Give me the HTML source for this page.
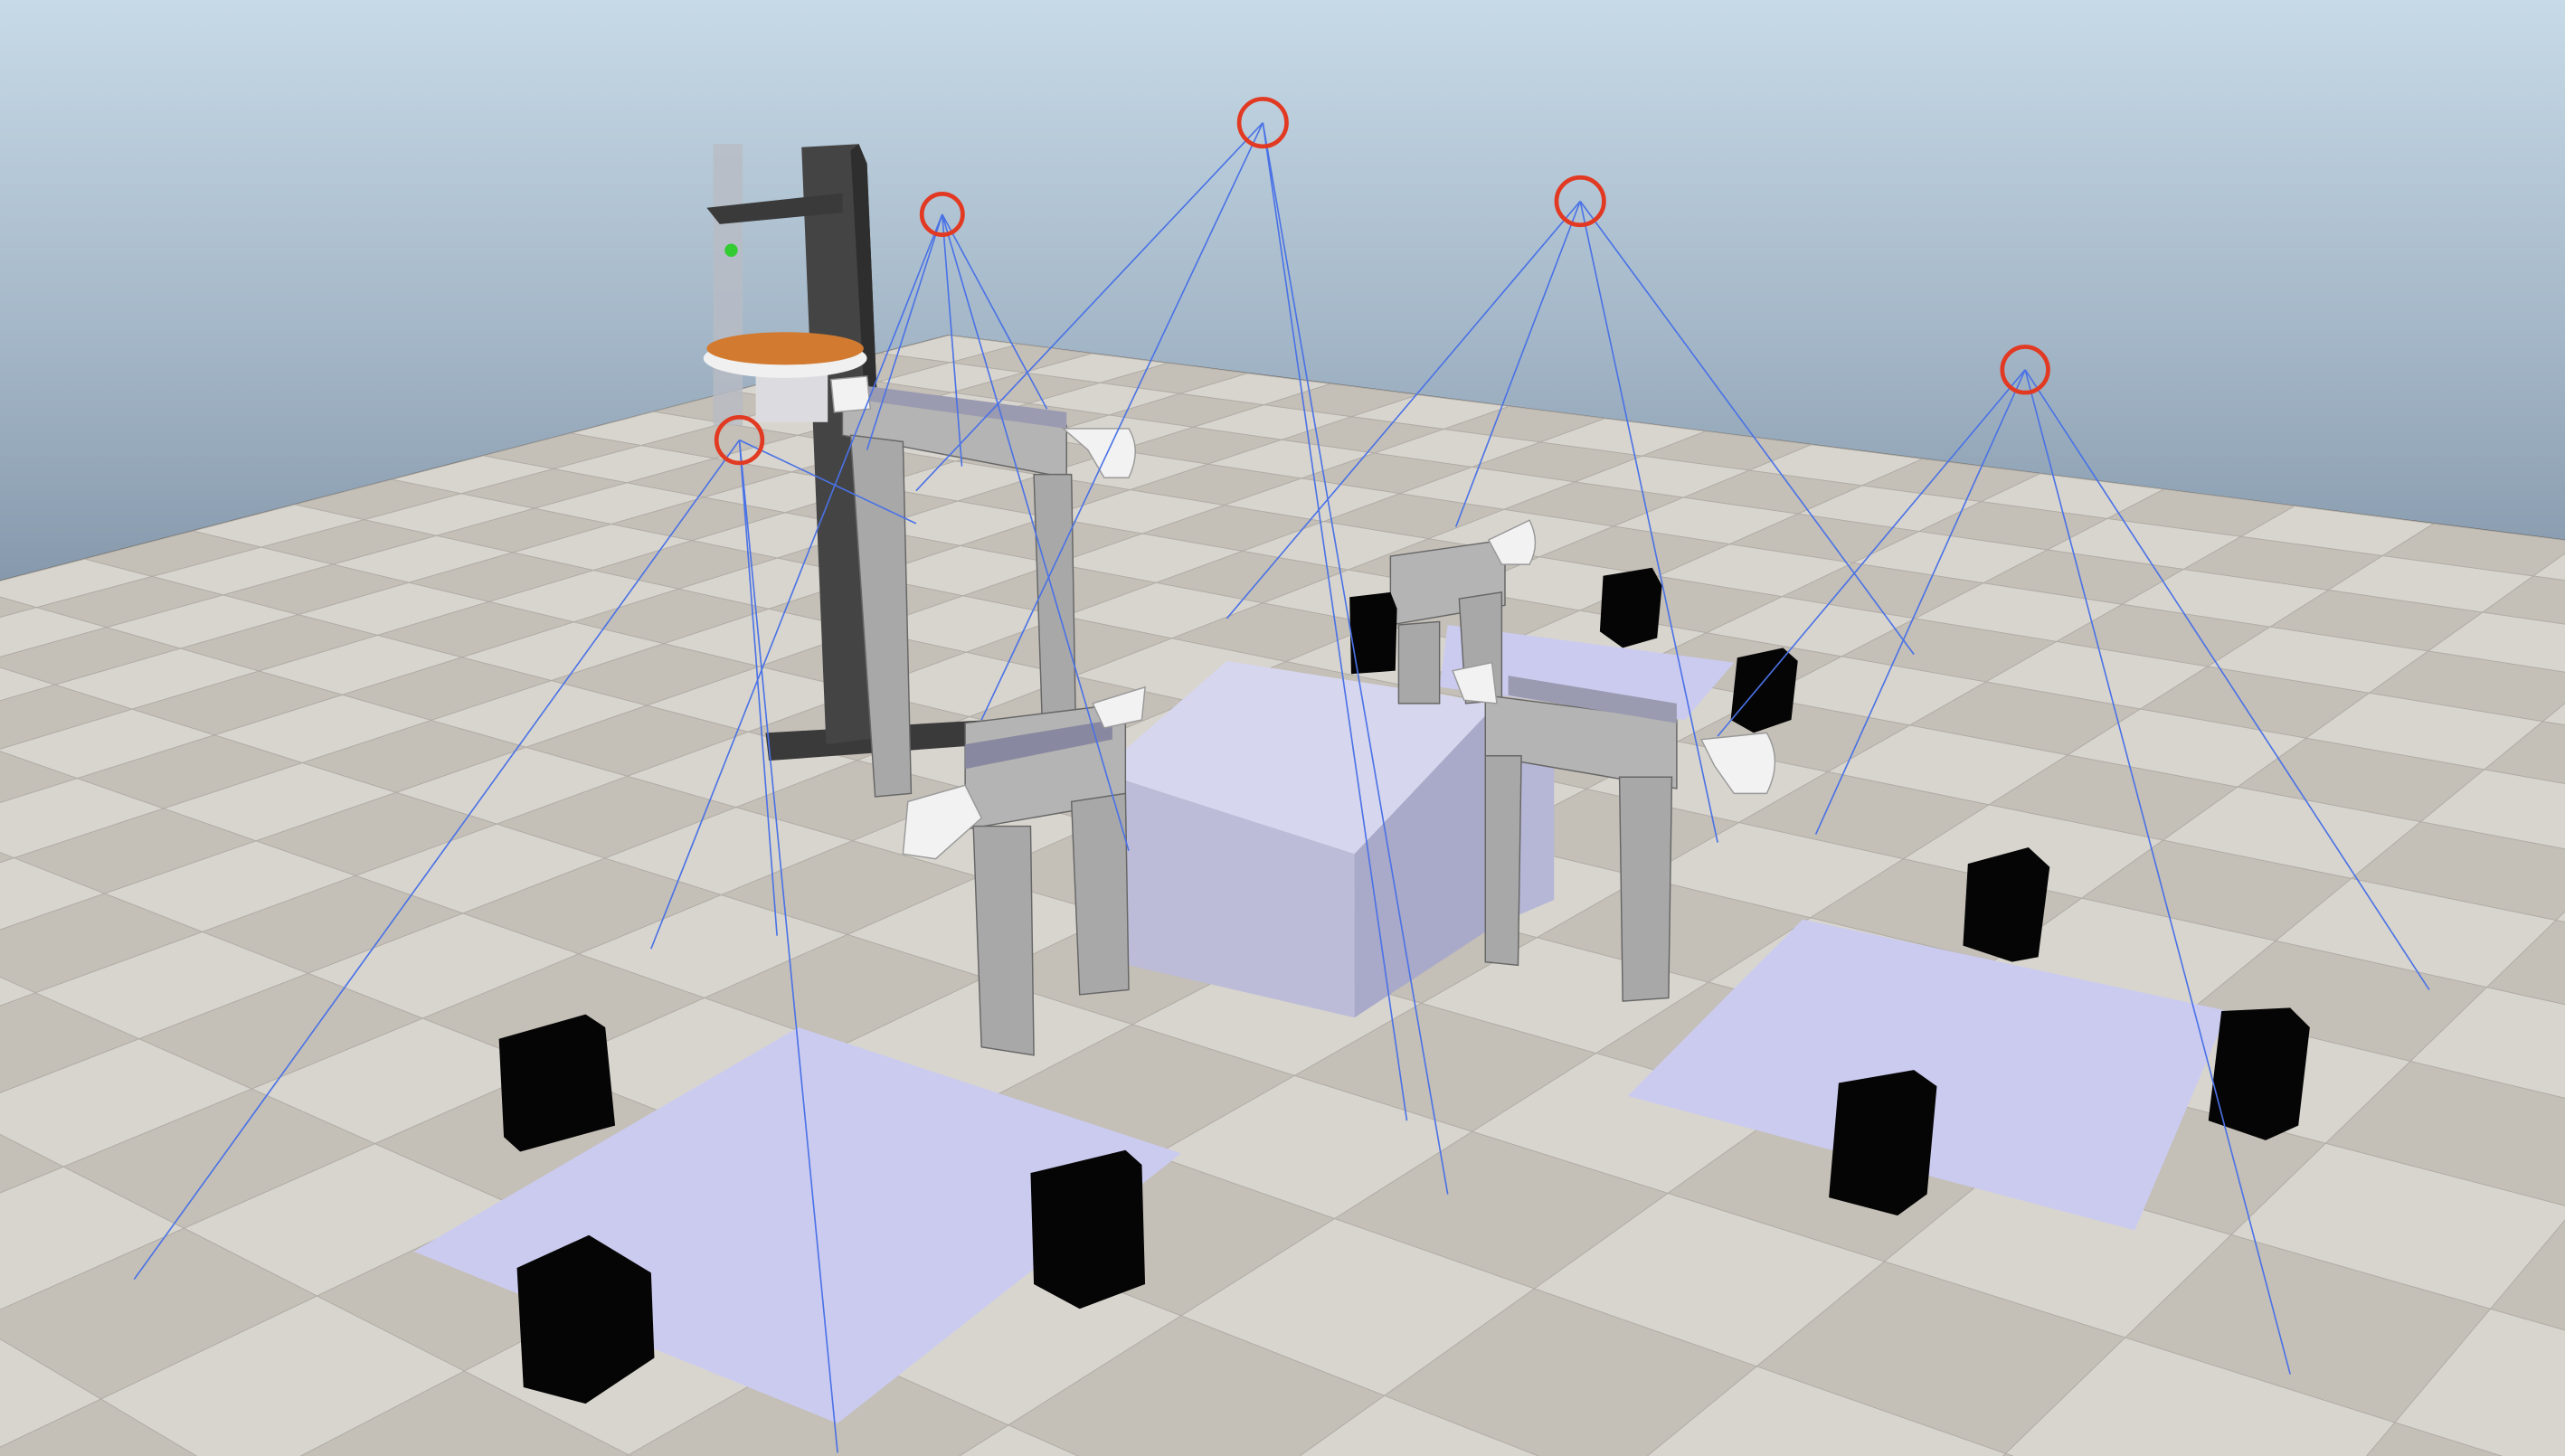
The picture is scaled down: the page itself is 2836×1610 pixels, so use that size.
<!DOCTYPE html>
<html><head><meta charset="utf-8"><style>
html,body{margin:0;padding:0;overflow:hidden;background:#9fb2c3;width:2836px;height:1610px}
#wrap{width:2836px;height:1610px;overflow:hidden;position:relative}
svg{display:block;overflow:hidden}
</style></head><body>
<div id="wrap">
<svg id="s" xmlns="http://www.w3.org/2000/svg" width="2836" height="1610" viewBox="0 0 1568 890" preserveAspectRatio="none">
<defs>
<linearGradient id="sky" x1="0" y1="0" x2="0" y2="1">
<stop offset="0" stop-color="#c7dae7"/><stop offset="0.5" stop-color="#a3b6c7"/><stop offset="1" stop-color="#7a8da1"/>
</linearGradient>
</defs>
<rect x="0" y="0" width="1568" height="420" fill="url(#sky)"/>
<polygon points="580,205 2000,385 700,2400 -900,588" fill="#cdc9c1" stroke="#6a6a6a" stroke-width="1"/>
<g id="floor"></g>
<g id="objs">
<polygon points="488,628 722,705 512,870 253,765" fill="#cbcbf0"/>
<polygon points="1102,562 1362,618 1305,752 995,670" fill="#cbcbf0"/>
<polygon points="885,382 1060,405 1030,440 880,420" fill="#cbcbf0"/>
<rect x="436" y="88" width="18" height="172" fill="#b8bcc4" opacity="0.8"/>
<circle cx="447" cy="153" r="4" fill="#3c3"/>
<polygon points="468,448 605,440 605,455 470,465" fill="#3a3a3a"/>
<polygon points="490,90 525,88 530,100 545,450 505,455" fill="#444"/>
<polygon points="520,92 525,88 530,100 545,450 540,450" fill="#2e2e2e"/>
<polygon points="432,127 515,118 515,130 440,137" fill="#3a3a3a"/>
<rect x="462" y="222" width="44" height="36" fill="#dcdce0"/>
<ellipse cx="480" cy="219" rx="50" ry="12" fill="#f0f0f0"/>
<ellipse cx="480" cy="213" rx="48" ry="10" fill="#d27a30"/>
<polygon points="750,404 915,430 828,522 672,472" fill="#d6d6ee"/>
<polygon points="672,472 828,522 828,622 690,590" fill="#bcbcd8"/>
<polygon points="828,522 915,430 915,565 828,622" fill="#a9a9c9"/>
<polygon points="915,430 950,440 950,550 915,565" fill="#b6b6d6"/>
<polygon points="515,238 652,260 652,292 515,266" fill="#b4b4b4" stroke="#666" stroke-width="0.8"/>
<polygon points="530,236 652,252 652,262 530,245" fill="#9a9ab0"/>
<polygon points="520,266 552,270 557,485 535,487" fill="#a8a8a8" stroke="#666" stroke-width="0.8"/>
<polygon points="632,290 655,290 658,470 638,468" fill="#a8a8a8" stroke="#666" stroke-width="0.8"/>
<polygon points="850,340 920,330 920,370 850,382" fill="#b4b4b4" stroke="#666" stroke-width="0.8"/>
<polygon points="855,382 880,380 880,430 855,430" fill="#a8a8a8" stroke="#666" stroke-width="0.8"/>
<polygon points="892,366 918,362 918,428 896,430" fill="#a8a8a8" stroke="#666" stroke-width="0.8"/>
<polygon points="908,425 1025,440 1025,482 908,462" fill="#b4b4b4" stroke="#666" stroke-width="0.8"/>
<polygon points="922,413 1025,430 1025,442 922,425" fill="#9a9ab0"/>
<polygon points="908,462 930,462 928,590 908,588" fill="#a8a8a8" stroke="#666" stroke-width="0.8"/>
<polygon points="990,475 1022,475 1020,610 992,612" fill="#a8a8a8" stroke="#666" stroke-width="0.8"/>
<polygon points="590,442 688,430 688,490 590,507" fill="#b4b4b4" stroke="#666" stroke-width="0.8"/>
<polygon points="590,455 680,440 680,452 590,470" fill="#8888a0"/>
<polygon points="595,505 630,505 632,645 600,640" fill="#a8a8a8" stroke="#666" stroke-width="0.8"/>
<polygon points="655,490 688,485 690,605 660,608" fill="#a8a8a8" stroke="#666" stroke-width="0.8"/>
<g fill="#f2f2f2" stroke="#999" stroke-width="0.8">
<path d="M650,262 L690,262 Q698,275 690,292 L675,292 L665,275 Z"/>
<path d="M590,480 L555,490 L552,522 L572,525 L600,500 Z"/>
<path d="M1040,452 L1080,448 Q1090,465 1080,485 L1060,485 L1048,468 Z"/>
<path d="M910,330 L935,318 Q942,332 935,345 L918,345 Z"/>
<path d="M668,430 L700,420 L698,440 L675,445 Z"/>
<path d="M888,410 L912,405 L915,430 L895,428 Z"/>
<path d="M508,232 L530,230 L532,250 L510,252 Z"/>
</g>
<g fill="#050505">
<polygon points="305,635 358,620 370,628 376,688 318,704 308,695"/>
<polygon points="630,717 688,703 698,712 700,785 660,800 632,785"/>
<polygon points="316,775 360,755 398,778 400,830 358,858 320,848"/>
<polygon points="1203,528 1240,518 1253,530 1246,585 1230,588 1200,578"/>
<polygon points="1124,662 1170,654 1184,664 1178,730 1160,743 1118,732"/>
<polygon points="1358,618 1400,616 1412,628 1405,688 1385,697 1350,685"/>
<polygon points="825,365 850,362 854,372 853,410 826,412"/>
<polygon points="980,352 1010,347 1016,358 1013,390 992,396 978,386"/>
<polygon points="1062,402 1090,396 1099,404 1095,440 1072,448 1058,440"/>
</g>
<g stroke="#4a72e6" stroke-width="0.9" fill="none">
<path d="M452,269 L82,782 M452,269 L512,888 M452,269 L475,572 M452,269 L560,320"/>
<path d="M576,131 L398,580 M576,131 L588,285 M576,131 L690,520 M576,131 L640,250 M576,131 L530,275"/>
<path d="M772,75 L600,440 M772,75 L885,730 M772,75 L860,685 M772,75 L560,300"/>
<path d="M966,123 L1170,400 M966,123 L1050,515 M966,123 L750,378 M966,123 L890,322"/>
<path d="M1238,226 L1485,605 M1238,226 L1400,840 M1238,226 L1110,510 M1238,226 L1050,450"/>
</g>
<g stroke="#e23a22" stroke-width="2.6" fill="none">
<circle cx="772" cy="75" r="14.5"/><circle cx="576" cy="131" r="12.5"/><circle cx="966" cy="123" r="14.5"/><circle cx="1238" cy="226" r="14"/><circle cx="452" cy="269" r="14"/>
</g>
</g>
</svg>
</div>
<script>
(function(){
var P=[[580,205],[2000,385],[700,2400],[-900,588]];
var x0=P[0][0],y0=P[0][1],x1=P[1][0],y1=P[1][1],x2=P[2][0],y2=P[2][1],x3=P[3][0],y3=P[3][1];
var dx1=x1-x2,dx2=x3-x2,dx3=x0-x1+x2-x3,dy1=y1-y2,dy2=y3-y2,dy3=y0-y1+y2-y3;
var den=dx1*dy2-dx2*dy1;
var g=(dx3*dy2-dx2*dy3)/den,h=(dx1*dy3-dx3*dy1)/den;
var a=x1-x0+g*x1,b=x3-x0+h*x3,c=x0,d=y1-y0+g*y1,e=y3-y0+h*y3,f=y0;
function pr(u,v){var w=g*u+h*v+1;return ((a*u+b*v+c)/w).toFixed(1)+','+((d*u+e*v+f)/w).toFixed(1);}
var N=20,NS='http://www.w3.org/2000/svg',fl=document.getElementById('floor');
for(var i=0;i!==N;i++)for(var j=0;j!==N;j++){
var u=i/N,v=j/N,du=1/N;
var p=document.createElementNS(NS,'polygon');
p.setAttribute('points',pr(u,v)+' '+pr(u+du,v)+' '+pr(u+du,v+du)+' '+pr(u,v+du));
p.setAttribute('fill',((i+j)%2)?'#c4bfb7':'#d8d5ce');
p.setAttribute('stroke','#b0aca5');
p.setAttribute('stroke-width','0.5');
fl.appendChild(p);
}
})();
</script>
</body></html>
